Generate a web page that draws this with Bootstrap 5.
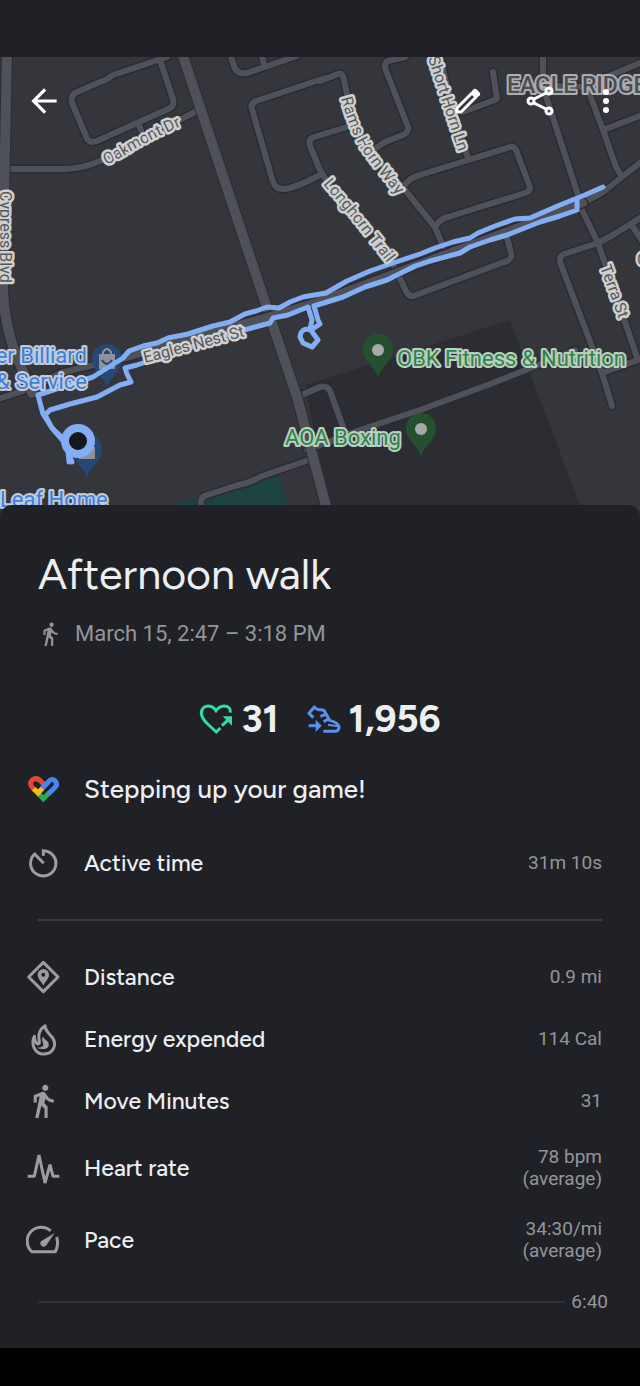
<!DOCTYPE html>
<html lang="en">
<head>
<meta charset="utf-8">
<meta name="viewport" content="width=device-width, initial-scale=1">
<title>Afternoon walk</title>
<link href="https://cdn.jsdelivr.net/npm/bootstrap@5.3.0/dist/css/bootstrap.min.css" rel="stylesheet">
<style>
  body { background: #000; color: #eceef2; font-family: Roboto, "Liberation Sans", sans-serif; }
  .status-strip { height: 57px; background: #202126; }
  .map-view { height: 460px; background: #35363b; overflow: hidden; }
  .map-canvas { width: 100%; height: 100%; display: block; }
  .map-actions { height: 88px; padding: 0 16px 0 20px; gap: 24px; color: #fff; }
  .map-actions .btn { width: 48px; height: 48px; color: inherit; border: 0; padding: 0; }
  .map-actions .btn-slim { width: 36px; }
  .sheet { background: #202126; border-radius: 12px 12px 0 0; margin-top: -12px; padding: 44px 38px 35px; }
  .sheet-title, .totals, .metric-name { font-family: Figtree, Lato, sans-serif; }
  .sheet-title { font-weight: 400; font-size: 43px; line-height: 50px; margin-bottom: 21px; }
  .when { font-size: 22px; line-height: 28px; color: #94959a; margin-bottom: 44px; gap: 12px; }
  .totals { height: 54px; gap: 28px; font-weight: 700; font-size: 38px; }
  .metric { min-height: 62px; padding: 14px 0; margin-left: -12px; }
  .metric-icon { width: 34px; margin-right: 24px; color: #9c9da1; }
  .metric-name { font-weight: 500; font-size: 23px; line-height: 28px; }
  .praise-row { margin-top: 12px; margin-bottom: 12px; }
  .praise { font-size: 26px; }
  .metric-value { font-size: 19px; line-height: 22px; color: #94959a; text-align: right; }
  .rule { border-top: 2px solid #3b3c41; margin: 25px 0; }
  .foot-row { margin: 15px -6px 0 0; gap: 6px; }
  .foot-rule { border-top: 2px solid #303136; }
  .nav-strip { height: 38px; background: #000; }
  .road { fill: none; stroke: #505158; stroke-linejoin: round; stroke-linecap: round; }
  .casing { stroke: #292c36; }
  .trail { fill: none; stroke: #84aef3; stroke-width: 5; stroke-linejoin: round; stroke-linecap: round; }
  .tag { font-family: Roboto, sans-serif; font-size: 16px; fill: #57585b; stroke: #cfd0d1; stroke-width: 5; paint-order: stroke; stroke-linejoin: round; }
  .poi { font-size: 22px; stroke-width: 4; }
  .poi-shop { fill: #3f7fdc; stroke: #c3ccda; }
  .poi-gym { fill: #2f8547; stroke: #bccfc2; }
  .district { font-size: 23px; font-weight: 500; stroke: #aeaeb1; fill: #4c4d51; stroke-width: 4; }
</style>
</head>
<body>
<div class="status-strip"></div>
<main>
  <section class="map-view position-relative" aria-label="Route map">
    <svg class="map-canvas" viewBox="0 57 640 460" preserveAspectRatio="xMidYMin slice" role="img" aria-label="Walk along Eagles Nest St">
      <defs>
        <g id="minor">
          <path d="M5 169H66Q84 168 100 161L195 112M167 57L113 75Q107 80 100 82L77 92Q70 95 72 103L86 136Q88 144 97 141L168 109Q175 106 173 99L160 60M138 123L141 130"/>
          <path d="M231 57L234 66Q237 75 247 73L297 56M262 56L264 65M325 78L256 101Q250 104 252 109L273 182Q276 190 285 189Q295 188 320 175M347 127L314 137Q308 139 310 146L320 170L335 195"/>
          <path d="M320 81L338 74Q343 72 344 80L348 100L365 145L405 190L435 227L443 246"/>
          <path d="M405 57L388 61Q384 63 385 68L408 127Q409 132 403 135L385 142L373 150M440 57L453 110L468 158M493 72L497 99L463 112M402 188Q410 177 420 175L510 147Q514 146 516 150L530 187Q530 192 525 193L448 217Q440 219 435 227"/>
          <path d="M543 57V87L578 195L582 210L598 243L638 360M553 86L587 87L603 130L616 167L622 177M587 85L645 61M603 130L645 114M645 159L622 177L603 192L583 203M645 215L613 235L598 243L564 254Q559 256 560 262L602 373L612 406M602 373L638 360L645 356M633 227L645 245"/>
          <path d="M507 237L511 253Q513 260 504 262L416 295Q409 298 406 291L392 262"/>
          <path d="M297 397L320 387Q327 385 330 391L343 427M307 450L360 430L420 410L493 383L533 367L575 350M312 459L262 476Q250 483 235 486L204 496Q200 499 201 507"/>
          <path d="M-5 400L35 387L60 373L123 358"/>
        </g>
        <path id="pin" d="M0 22C-3 12-15 6-15-6A15 15 0 0 1 15-6C15 6 3 12 0 22Z"/>
        <path id="oakmont" d="M106 165Q125 156 133 150Q155 137 200 118"/>
        <path id="rams" d="M341 98Q348 125 360 147Q375 170 410 210"/>
        <path id="longhorn" d="M323 184L350 216L400 279"/>
      </defs>
      <path fill="#2c2d32" d="M305 385L510 320L580 505L584 517H331Z"/>
      <path fill="#1c433f" d="M165 508L240 482L277 470L291 517Z"/>
      <use href="#minor" class="road casing" stroke-width="9"/>
      <use href="#minor" class="road" stroke-width="6"/>
      <path class="road casing" stroke-width="12" d="M7 50L4 200L3 290Q4 320 14 350L32 393M181 50L270 317L297 397L329 517"/>
      <path class="road" stroke-width="10" d="M7 50L4 200L3 290Q4 320 14 350L32 393M181 50L270 317L297 397L329 517"/>
      <path class="road casing" stroke-width="11" d="M123 358L267 317L320 301L583 203"/>
      <path class="road" stroke-width="8" d="M123 358L267 317L320 301L583 203"/>
      <use href="#pin" x="107" y="365" fill="#274775"/>
      <path fill="#8d939e" d="M99 354h16v15H99Z"/>
      <path fill="none" stroke="#8d939e" stroke-width="2" d="M103 355V352Q107 346 111 352V355"/>
      <path fill="none" stroke="#274775" stroke-width="2" d="M102 360Q107 368 112 360"/>
      <use href="#pin" x="87" y="455" fill="#274775"/>
      <path fill="#8d939e" d="M79 447h16v12H79Z"/>
      <use href="#pin" x="378" y="355" fill="#24502f"/><circle cx="378" cy="350" r="6" fill="#a5aaa6"/>
      <use href="#pin" x="421" y="434" fill="#24502f"/><circle cx="421" cy="429" r="6" fill="#a5aaa6"/>
      <path class="trail" d="M72 462L65 443L52 428L43 414L38 395L93 377L123 358L129 351L143 346L157 343L168 338L188 334L213 326L230 322L245 314L256 311L267 307L279 308L290 302L303 297L326 293L347 281L370 271L393 263L420 254L435 248L453 242L470 238L478 233L495 226L515 219L530 218L560 205L585 195L603 187"/>
      <path class="trail" d="M577 199L577 210L560 216L540 222L507 235L490 240L470 247L460 253L430 261L415 266L387 280L365 287L343 297L314 306L318 320L320 324L311 330Q301 327 300 337L303 343L312 347L318 340L310 329L312 320L308 307L288 315L273 318L270 323L255 327L230 334L137 365L125 368L127 374L131 382L120 385L97 397L70 404L50 410L45 415L52 428L67 442"/>
      <path class="trail" stroke-width="8" d="M67 442L69 462"/>
      <circle cx="78" cy="441" r="13" fill="#15171c" stroke="#84aef3" stroke-width="8"/>
      <text class="tag"><textPath href="#oakmont">Oakmont Dr</textPath></text>
      <text class="tag" transform="translate(0 191) rotate(90)">Cypress Blvd</text>
      <text class="tag"><textPath href="#rams">Rams Horn Way</textPath></text>
      <text class="tag"><textPath href="#longhorn">Longhorn Trail</textPath></text>
      <text class="tag" transform="translate(428 58) rotate(72)">Short Horn Ln</text>
      <text class="tag" transform="translate(600 267) rotate(70)">Terra St</text>
      <text class="tag" transform="translate(145 363) rotate(-15)">Eagles Nest St</text>
      <text class="tag district" x="507" y="93">EAGLE RIDGE</text>
      <text class="tag" x="637" y="265">C</text>
      <text class="tag poi poi-shop" x="87" y="363" text-anchor="end">er Billiard</text>
      <text class="tag poi poi-shop" x="87" y="389" text-anchor="end">&amp; Service</text>
      <text class="tag poi poi-shop" x="0" y="507">Leaf Home</text>
      <text class="tag poi poi-gym" x="397" y="366">OBK Fitness &amp; Nutrition</text>
      <text class="tag poi poi-gym" x="285" y="445">AOA Boxing</text>
    </svg>
    <div class="map-actions position-absolute top-0 start-0 end-0 d-flex align-items-center">
      <button class="btn me-auto" type="button" aria-label="Back"><svg width="38" height="38" viewBox="0 0 24 24" fill="currentColor"><path d="M20 11H7.830l5.590-5.590L12 4l-8 8 8 8 1.410-1.410L7.830 13H20v-2z"/></svg></button>
      <button class="btn" type="button" aria-label="Edit"><svg width="36" height="36" viewBox="0 0 36 36" fill="none" stroke="currentColor" stroke-width="3"><path stroke-linejoin="round" d="M7 29V25L22 10L26 14L11 29Z"/><path stroke-width="6" stroke-linecap="round" d="M25 9L27 11"/></svg></button>
      <button class="btn" type="button" aria-label="Share"><svg width="36" height="36" viewBox="0 0 36 36" fill="none" stroke="currentColor" stroke-width="3"><circle cx="9" cy="18" r="3"/><circle cx="27" cy="8" r="3"/><circle cx="27" cy="28" r="3"/><path d="M12 16L24 10M12 20L24 26"/></svg></button>
      <button class="btn btn-slim" type="button" aria-label="More options"><svg width="36" height="36" viewBox="0 0 36 36" fill="currentColor"><circle cx="18" cy="9" r="3"/><circle cx="18" cy="18" r="3"/><circle cx="18" cy="27" r="3"/></svg></button>
    </div>
  </section>

  <section class="sheet position-relative">
    <h1 class="sheet-title">Afternoon walk</h1>
    <p class="when d-flex align-items-center">
      <svg width="25" height="25" viewBox="1 1 23 23" fill="currentColor" aria-hidden="true"><path id="walker" d="M13.500 5.500c1.100 0 2-.9 2-2s-.9-2-2-2-2 .9-2 2 .9 2 2 2zM9.800 8.900L7 23h2.100l1.800-8 2.100 2v6h2v-7.500l-2.100-2 .6-3C14.800 12 16.800 13 19 13v-2c-1.900 0-3.500-1-4.300-2.400l-1-1.600c-.4-.6-1-1-1.700-1-.3 0-.5.1-.8.1L6 8.300V13h2V9.600l1.800-.7"/></svg>
      <span>March 15, 2:47 – 3:18 PM</span>
    </p>
    <div class="totals d-flex justify-content-center align-items-center">
      <div class="d-flex align-items-center gap-2">
        <svg width="34" height="34" viewBox="62 34 102 102" fill="none" stroke="#31dca6" stroke-width="9" role="img" aria-label="Heart Points"><path d="M156 66Q158 46 137 46Q122 47 113 60Q104 46 89 46Q70 47 69 68Q70 83 88 100L114 124L126 112"/><path d="M131 105L149 88"/><path fill="#31dca6" stroke="none" d="M133 77H161V105Z"/></svg>
        <span>31</span>
      </div>
      <div class="d-flex align-items-center gap-2">
        <svg width="34" height="34" viewBox="383 34 102 102" fill="none" stroke="#5a90ec" stroke-width="9" stroke-linejoin="round" role="img" aria-label="Steps"><path d="M402 81L389 68L405 49Q411 58 424 57Q435 56 438 66L451 89Q479 96 479 110Q478 122 467 122H432M423 77L439 71M433 93L448 84"/><path d="M388 105H414"/><path fill="#5a90ec" stroke="none" d="M409 87L427 105L409 124Z"/><path stroke-width="6" d="M446 102L476 107"/></svg>
        <span>1,956</span>
      </div>
    </div>

    <div class="metric praise-row d-flex align-items-center">
      <svg class="metric-icon" height="34" viewBox="48 37 102 102" fill="none" stroke-width="15" aria-hidden="true"><path stroke="#e1483b" d="M73 90Q54 73 67 61Q80 51 94 66L101 73"/><path stroke="#35a854" d="M83 99L100 117L118 99"/><path stroke="#4788ee" d="M94 89L114 68Q124 54 135 63Q145 73 134 84L115 103"/><path stroke="#fbbc11" d="M71 87L84 100L97 86"/></svg>
      <span class="metric-name praise">Stepping up your game!</span>
    </div>

    <div class="metric d-flex align-items-center">
      <svg class="metric-icon" height="34" viewBox="48 259 102 102" fill="none" stroke="currentColor" stroke-width="9" aria-hidden="true"><path d="M100 288V273A38 38 0 1 1 74 283L101 311"/></svg>
      <span class="metric-name flex-grow-1">Active time</span>
      <span class="metric-value">31m 10s</span>
    </div>
    <div class="rule"></div>
    <div class="metric d-flex align-items-center">
      <svg class="metric-icon" height="34" viewBox="48 31 102 102" aria-hidden="true"><path fill="none" stroke="currentColor" stroke-width="9" stroke-linejoin="round" d="M100 38L144 82L100 126L56 82Z"/><path fill="currentColor" fill-rule="evenodd" d="M100 108C96 96 83 88 83 75A17 17 0 0 1 117 75C117 88 104 96 100 108ZM100 69A6 6 0 1 0 100 81A6 6 0 1 0 100 69Z"/></svg>
      <span class="metric-name flex-grow-1">Distance</span>
      <span class="metric-value">0.9 mi</span>
    </div>
    <div class="metric d-flex align-items-center">
      <svg class="metric-icon" height="34" viewBox="48 217 102 102" aria-hidden="true"><path fill="none" stroke="currentColor" stroke-width="9" stroke-linejoin="round" d="M105 228C88 240 84 254 87 270Q91 282 84 283Q74 279 73 260C62 283 74 313 101 313C124 313 137 295 133 276C129 257 106 251 105 228Z"/><path fill="currentColor" d="M98 260C103 272 119 273 116 288C113 300 96 301 82 294C96 294 103 288 99 280Q94 270 98 260Z"/></svg>
      <span class="metric-name flex-grow-1">Energy expended</span>
      <span class="metric-value">114 Cal</span>
    </div>
    <div class="metric d-flex align-items-center">
      <svg class="metric-icon" height="34" viewBox="1 1 22 22" fill="currentColor" aria-hidden="true"><use href="#walker"/></svg>
      <span class="metric-name flex-grow-1">Move Minutes</span>
      <span class="metric-value">31</span>
    </div>
    <div class="metric d-flex align-items-center">
      <svg class="metric-icon" height="34" viewBox="48 64 102 102" fill="none" stroke="currentColor" stroke-width="9" aria-hidden="true"><path stroke-linejoin="bevel" d="M53 140H73L87 76L105 160L120 105L129 140H148"/></svg>
      <span class="metric-name flex-grow-1">Heart rate</span>
      <span class="metric-value">78 bpm<br>(average)</span>
    </div>
    <div class="metric d-flex align-items-center">
      <svg class="metric-icon" height="34" viewBox="48 279 102 102" aria-hidden="true"><path fill="none" stroke="currentColor" stroke-width="9" stroke-linejoin="round" d="M122 303A41 41 0 0 0 65 365H136Q147 345 140 321"/><path fill="currentColor" d="M134 309L108 347A10 10 0 0 1 93 334Z"/></svg>
      <span class="metric-name flex-grow-1">Pace</span>
      <span class="metric-value">34:30/mi<br>(average)</span>
    </div>
    <div class="foot-row d-flex align-items-center">
      <div class="foot-rule flex-grow-1"></div>
      <span class="metric-value">6:40</span>
    </div>
  </section>
</main>
<div class="nav-strip"></div>
<script src="https://cdn.jsdelivr.net/npm/bootstrap@5.3.0/dist/js/bootstrap.bundle.min.js"></script>
</body>
</html>
